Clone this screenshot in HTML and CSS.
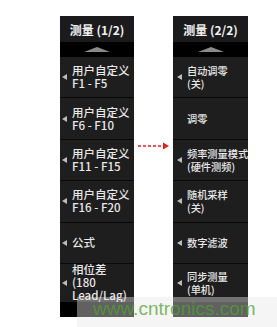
FILE: index.html
```html
<!DOCTYPE html>
<html lang="zh">
<head>
<meta charset="utf-8">
<link rel="stylesheet" href="styles.css">
</head>
<body>
<div class="stage">
  <div class="panel panel-left">
    <div class="head">测量 (1/2)</div>
    <div class="band"><span class="tri"></span></div>
    <div class="item"><span class="arr"></span><span class="txt"><span class="ln">用户自定义</span><span class="ln">F1 - F5</span></span></div>
    <div class="item"><span class="arr"></span><span class="txt"><span class="ln">用户自定义</span><span class="ln">F6 - F10</span></span></div>
    <div class="item"><span class="arr"></span><span class="txt"><span class="ln">用户自定义</span><span class="ln">F11 - F15</span></span></div>
    <div class="item"><span class="arr"></span><span class="txt"><span class="ln">用户自定义</span><span class="ln">F16 - F20</span></span></div>
    <div class="item"><span class="arr"></span><span class="txt"><span class="ln">公式</span></span></div>
    <div class="item last"><span class="arr"></span><span class="txt"><span class="ln">相位差</span><span class="ln">(180</span><span class="ln">Lead/Lag)</span></span></div>
    <div class="foot"></div>
  </div>
  <div class="gap">
    <svg class="dash" width="32" height="8" viewBox="0 0 32 8">
      <line x1="0" y1="4" x2="26" y2="4" stroke="#e02020" stroke-width="1.6" stroke-dasharray="3 2"/>
      <polygon points="25,0.5 31,4 25,7.5" fill="#e02020"/>
    </svg>
  </div>
  <div class="panel panel-right">
    <div class="head">测量 (2/2)</div>
    <div class="band"><span class="tri"></span></div>
    <div class="item"><span class="arr"></span><span class="txt"><span class="ln">自动调零</span><span class="ln">(关)</span></span></div>
    <div class="item"><span class="arr none"></span><span class="txt"><span class="ln">调零</span></span></div>
    <div class="item"><span class="arr"></span><span class="txt"><span class="ln">频率测量模式</span><span class="ln">(硬件测频)</span></span></div>
    <div class="item"><span class="arr"></span><span class="txt"><span class="ln">随机采样</span><span class="ln">(关)</span></span></div>
    <div class="item"><span class="arr"></span><span class="txt"><span class="ln">数字滤波</span></span></div>
    <div class="item last"><span class="arr"></span><span class="txt"><span class="ln">同步测量</span><span class="ln">(单机)</span></span></div>
    <div class="foot"></div>
  </div>
</div>
<div class="watermark"><span class="wm-text">www.cntronics.com</span></div>
</body>
</html>
```
FILE: styles.css
```css
html, body {
  margin: 0;
  padding: 0;
  background: #ffffff;
}
body {
  width: 277px;
  height: 327px;
  overflow: hidden;
  position: relative;
  font-family: "Noto Sans", "Noto Sans CJK SC", sans-serif;
}
.stage {
  display: flex;
  align-items: flex-start;
  padding: 16px 0 0 60px;
}
.panel {
  display: flex;
  flex-direction: column;
  background: #1e1e1e;
}
.panel-left { width: 74px; }
.panel-right { width: 75px; }
.gap {
  width: 39px;
  display: flex;
  justify-content: center;
  padding-top: 126px;
}
.head {
  height: 26px;
  background: #1b1b1d;
  color: #f2f2f2;
  font-size: 12px;
  font-weight: 700;
  display: flex;
  align-items: center;
  justify-content: center;
  font-family: "Noto Sans CJK SC", sans-serif;
}
.band {
  height: 15px;
  background: #000;
  display: flex;
  justify-content: center;
  align-items: center;
}
.tri {
  width: 0;
  height: 0;
  border-left: 13px solid transparent;
  border-right: 13px solid transparent;
  border-bottom: 5px solid #8a8a8a;
  margin-bottom: 1px;
}
.item {
  box-sizing: border-box;
  height: 41.4px;
  border-bottom: 1px solid #0a0a0a;
  display: flex;
  align-items: center;
  padding-left: 2px;
  color: #e8e8e8;
  font-size: 11.5px;
  font-family: "Noto Sans CJK SC", sans-serif;
  font-weight: 500;
}
.panel-right .item {
  padding-left: 4px;
  font-size: 10.2px;
}
.item.last {
  height: 38px;
  border-bottom: none;
}
.arr {
  width: 0;
  height: 0;
  border-top: 3px solid transparent;
  border-bottom: 3px solid transparent;
  border-right: 5px solid #bdbdbd;
  margin-right: 5px;
  flex: none;
}
.arr.none { border-right-color: transparent; }
.txt {
  display: flex;
  flex-direction: column;
  white-space: nowrap;
}
.ln {
  display: block;
  height: 13px;
  line-height: 13px;
}
.foot {
  height: 15px;
  background: #000;
}
.watermark {
  position: absolute;
  left: 77px;
  top: 297px;
  width: 200px;
  height: 30px;
  background: rgba(232, 232, 232, 0.42);
}
.wm-text {
  position: absolute;
  left: 16px;
  top: 1px;
  font-family: "Liberation Sans", Arial, sans-serif;
  font-size: 19px;
  color: rgba(80, 160, 50, 0.75);
}
```
